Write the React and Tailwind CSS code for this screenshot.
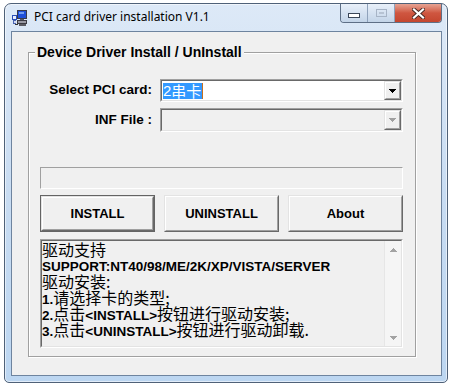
import React from "react";

const A = ({ children }) => (
  <span className="font-['Liberation_Sans',Arial,sans-serif] font-bold text-[13.5px] leading-[16px]">{children}</span>
);
const C = ({ children }) => (
  <span className="font-['Noto_Sans_CJK_SC',sans-serif] font-normal text-[16px] leading-[16px]">{children}</span>
);

function Arrow({ color = "#000" }) {
  return (
    <svg width="7" height="4" viewBox="0 0 7 4" shapeRendering="crispEdges">
      <rect x="0" y="0" width="7" height="1" fill={color} />
      <rect x="1" y="1" width="5" height="1" fill={color} />
      <rect x="2" y="2" width="3" height="1" fill={color} />
      <rect x="3" y="3" width="1" height="1" fill={color} />
    </svg>
  );
}

function DropBtn({ disabled }) {
  return (
    <div className="w-[17px] h-full border border-t-[#e3e3e3] border-l-[#e3e3e3] border-b-[#696969] border-r-[#696969]">
      <div className="w-full h-full border border-t-white border-l-white border-b-[#a0a0a0] border-r-[#a0a0a0] bg-[#f0f0f0] flex items-center justify-center">
        <Arrow color={disabled ? "#a0a0a0" : "#000"} />
      </div>
    </div>
  );
}

function Combo({ children, disabled, h }) {
  return (
    <div className={`w-[243px] ${h} border border-t-[#a0a0a0] border-l-[#a0a0a0] border-b-white border-r-white`}>
      <div className={`w-full h-full border border-t-[#696969] border-l-[#696969] border-b-[#e3e3e3] border-r-[#e3e3e3] flex ${disabled ? "bg-[#f0f0f0]" : "bg-white"}`}>
        <div className="flex-1 flex items-center pl-[1px]">{children}</div>
        <DropBtn disabled={disabled} />
      </div>
    </div>
  );
}

function Btn({ children, def }) {
  const inner = (
    <div className="w-full h-full border border-t-[#e3e3e3] border-l-[#e3e3e3] border-b-[#696969] border-r-[#696969]">
      <div className="w-full h-full border border-t-white border-l-white border-b-[#a0a0a0] border-r-[#a0a0a0] bg-[#f0f0f0] flex items-center justify-center">
        <span className="font-['Liberation_Sans',Arial,sans-serif] font-bold text-[13px] text-black">{children}</span>
      </div>
    </div>
  );
  return (
    <div className={`w-[115px] h-[37px] ${def ? "border border-[#646464]" : ""}`}>{inner}</div>
  );
}

function AppIcon() {
  return (
    <svg width="16" height="16" viewBox="0 0 16 16" shapeRendering="crispEdges">
      <rect x="5" y="0" width="10" height="9" fill="#3a3a48" />
      <rect x="6" y="1" width="8" height="7" fill="#1e4fd8" />
      <rect x="7" y="2" width="5" height="2" fill="#6f9cf2" />
      <rect x="8" y="9" width="4" height="1" fill="#5a5a66" />
      <rect x="5" y="10" width="10" height="4" fill="#3c3c44" />
      <rect x="6" y="11" width="8" height="2" fill="#9a9aa4" />
      <rect x="7" y="14" width="7" height="2" fill="#5c5c64" />
      <rect x="0" y="5" width="5" height="5" fill="#2a4fb8" />
      <rect x="1" y="6" width="3" height="3" fill="#e8eefc" />
      <rect x="1" y="10" width="3" height="4" fill="#4a64b0" />
      <rect x="2" y="11" width="2" height="2" fill="#cfd8f0" />
      <rect x="3" y="14" width="3" height="1" fill="#333" />
    </svg>
  );
}

function TitleButtons() {
  return (
    <div className="flex h-[19px] border border-t-0 border-[#5e6f86] rounded-b-[4px] overflow-hidden">
      <div className="w-[27px] h-full bg-gradient-to-b from-[#e9f0f9] via-[#d5e2f1] to-[#c3d4e8] flex items-center justify-center border-r border-[#8fa2bb]">
        <div className="w-[12px] h-[5px] mt-[4px] bg-white border border-[#3a4658]" />
      </div>
      <div className="w-[27px] h-full bg-gradient-to-b from-[#e9f0f9] via-[#d5e2f1] to-[#c3d4e8] flex items-center justify-center border-r border-[#8fa2bb]">
        <div className="w-[11px] h-[8px] border border-[#a7b4c6] flex items-center justify-center">
          <div className="w-[5px] h-[2px] border border-[#b7c3d3]" />
        </div>
      </div>
      <div className="w-[46px] h-full bg-gradient-to-b from-[#e6a393] via-[#cf5640] to-[#c4462f] flex items-center justify-center">
        <svg width="13" height="11" viewBox="0 0 13 11">
          <path d="M2 1.5 L11 9.5 M11 1.5 L2 9.5" stroke="#4a2a24" strokeWidth="4" strokeLinecap="square" />
          <path d="M2 1.5 L11 9.5 M11 1.5 L2 9.5" stroke="#ffffff" strokeWidth="2.2" strokeLinecap="square" />
        </svg>
      </div>
    </div>
  );
}

export default function App() {
  return (
    <div className="w-[451px] h-[387px] bg-white overflow-hidden">
      <div className="ml-[4px] mt-[3px] w-[444px] h-[380px] border border-[#4f6178] rounded-t-[7px] rounded-b-[5px] bg-gradient-to-b from-[#dde9f7] via-[#c8dcf2] to-[#bcd6f1] shadow-[inset_0_0_0_1px_rgba(255,255,255,0.55)] flex flex-col">
        <div className="h-[27px] flex items-start">
          <div className="ml-[7px] mt-[6px]">
            <AppIcon />
          </div>
          <div className="ml-[6px] mt-[5px] leading-[16px] text-[12px] font-['Noto_Sans',sans-serif] text-black whitespace-nowrap">
            PCI card driver installation V1.1
          </div>
          <div className="ml-auto mr-[5px]">
            <TitleButtons />
          </div>
        </div>
        <div className="ml-[6px] w-[431px] h-[345px] border border-[#6e849f] bg-[#f0f0f0]">
          <fieldset className="ml-[16px] mt-[12px] w-[388px] border border-[#a0a0a0] shadow-[inset_1px_1px_0_#fff,1px_1px_0_#fff]">
            <legend className="ml-[6px] px-[2px] bg-[#f0f0f0] leading-[16px] font-['Liberation_Sans',Arial,sans-serif] font-bold text-[14px] text-black">
              Device Driver Install / UnInstall
            </legend>
            <div className="pl-[11px] pb-[8px] flex flex-col">
              <div className="mt-[19px] flex items-center gap-[8px]">
                <div className="w-[112px] text-right font-['Liberation_Sans',Arial,sans-serif] font-bold text-[13.5px] text-black whitespace-nowrap">
                  Select PCI card:
                </div>
                <Combo h="h-[23px]">
                  <span className="flex items-center">
                    <span className="bg-[#3399ff] text-white h-[16px] leading-[16px] flex items-center pr-[1px]">
                      <span className="font-['Liberation_Sans',Arial,sans-serif] text-[15px]">2</span>
                      <span className="font-['Noto_Sans_CJK_SC',sans-serif] text-[15px]">串卡</span>
                    </span>
                    <span className="w-[1px] h-[16px] bg-[#c8701e]" />
                  </span>
                </Combo>
              </div>
              <div className="mt-[6px] flex items-center gap-[8px]">
                <div className="w-[112px] text-right font-['Liberation_Sans',Arial,sans-serif] font-bold text-[13.5px] text-black whitespace-nowrap">
                  INF File :
                </div>
                <Combo h="h-[24px]" disabled />
              </div>
              <div className="mt-[35px] w-[363px] h-[22px] border border-t-[#a0a0a0] border-l-[#a0a0a0] border-b-white border-r-white" />
              <div className="mt-[6px] flex gap-[9px]">
                <Btn def>INSTALL</Btn>
                <Btn>UNINSTALL</Btn>
                <Btn>About</Btn>
              </div>
              <div className="mt-[7px] w-[363px] h-[109px] border border-t-[#a0a0a0] border-l-[#a0a0a0] border-b-white border-r-white">
                <div className="w-full h-full border border-t-[#696969] border-l-[#696969] border-b-[#e3e3e3] border-r-[#e3e3e3] bg-[#f0f0f0] flex">
                  <div className="flex-1 text-black whitespace-nowrap">
                    <div className="h-[16px] leading-[16px]"><C>驱动支持</C></div>
                    <div className="h-[16px] leading-[16px]"><A>SUPPORT:NT40/98/ME/2K/XP/VISTA/SERVER</A></div>
                    <div className="h-[16px] leading-[16px]"><C>驱动安装:</C></div>
                    <div className="h-[16px] leading-[16px]"><A>1.</A><C>请选择卡的类型;</C></div>
                    <div className="h-[16px] leading-[16px]"><A>2.</A><C>点击</C><A>&lt;INSTALL&gt;</A><C>按钮进行驱动安装;</C></div>
                    <div className="h-[16px] leading-[16px]"><A>3.</A><C>点击</C><A>&lt;UNINSTALL&gt;</A><C>按钮进行驱动卸载.</C></div>
                  </div>
                  <div className="w-[17px] h-full border-l border-[#e6e6e6] bg-[#f5f5f5] flex flex-col justify-between items-center">
                    <div className="h-[17px] flex items-center justify-center">
                      <svg width="7" height="4" viewBox="0 0 7 4" shapeRendering="crispEdges">
                        <rect x="3" y="0" width="1" height="1" fill="#a3a3a3" />
                        <rect x="2" y="1" width="3" height="1" fill="#a3a3a3" />
                        <rect x="1" y="2" width="5" height="1" fill="#a3a3a3" />
                        <rect x="0" y="3" width="7" height="1" fill="#a3a3a3" />
                      </svg>
                    </div>
                    <div className="h-[17px] flex items-center justify-center">
                      <Arrow color="#a3a3a3" />
                    </div>
                  </div>
                </div>
              </div>
            </div>
          </fieldset>
        </div>
      </div>
    </div>
  );
}
